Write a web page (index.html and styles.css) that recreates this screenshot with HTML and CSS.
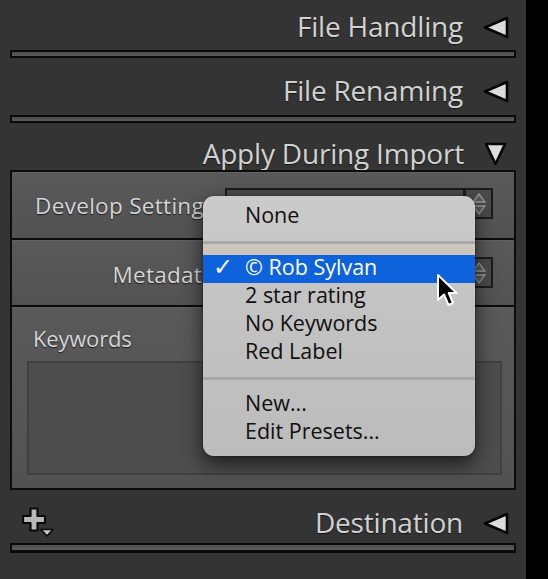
FILE: index.html
```html
<!DOCTYPE html>
<html>
<head>
<meta charset="utf-8">
<title>Import panel</title>
<link rel="stylesheet" href="styles.css">
</head>
<body>
<div class="app">
  <div class="panel">
    <div class="header h1">
      <span class="title">File Handling</span>
      <svg class="tri-left" width="26" height="23" viewBox="0 0 26 23"><polygon points="24,2 24,21 2,11.5" /></svg>
    </div>
    <div class="bar"></div>
    <div class="header h2">
      <span class="title">File Renaming</span>
      <svg class="tri-left" width="26" height="23" viewBox="0 0 26 23"><polygon points="24,2 24,21 2,11.5" /></svg>
    </div>
    <div class="bar"></div>
    <div class="header h3">
      <span class="title">Apply During Import</span>
      <svg class="tri-down" width="23" height="24" viewBox="0 0 23 24"><polygon points="2,2 21,2 11.5,22" /></svg>
    </div>
    <div class="box">
      <div class="row r1">
        <span class="label">Develop Settings</span>
        <div class="field"></div>
        <div class="stepper">
          <svg width="16" height="24" viewBox="0 0 16 24"><polygon points="8,2 14,10 2,10" /><polygon points="2,14 14,14 8,22" /></svg>
        </div>
      </div>
      <div class="row r2">
        <span class="label">Metadata</span>
        <div class="field"></div>
        <div class="stepper">
          <svg width="16" height="24" viewBox="0 0 16 24"><polygon points="8,2 14,10 2,10" /><polygon points="2,14 14,14 8,22" /></svg>
        </div>
      </div>
      <div class="row kw">
        <span class="label kw-label">Keywords</span>
        <div class="textarea"></div>
      </div>
    </div>
    <div class="header h4">
      <svg class="plus" width="34" height="32" viewBox="0 0 34 32">
        <path class="plus-shape" d="M8.5 1.5 h7 v7.5 h7.5 v7 h-7.5 v7.5 h-7 v-7.5 h-7.5 v-7 h7.5 z" />
        <polygon class="plus-tri" points="19,22.5 31,22.5 25,29" />
      </svg>
      <span class="title dest">Destination</span>
      <svg class="tri-left" width="26" height="23" viewBox="0 0 26 23"><polygon points="24,2 24,21 2,11.5" /></svg>
    </div>
    <div class="bar bar-last"></div>
  </div>
  <div class="edge"></div>
</div>

<div class="menu">
  <div class="item"><span class="check"></span><span>None</span></div>
  <div class="sep sep-warm"><div class="sep-line"></div></div>
  <div class="item selected"><span class="check">✓</span><span>© Rob Sylvan</span></div>
  <div class="item"><span class="check"></span><span>2 star rating</span></div>
  <div class="item"><span class="check"></span><span>No Keywords</span></div>
  <div class="item"><span class="check"></span><span>Red Label</span></div>
  <div class="sep"><div class="sep-line"></div></div>
  <div class="item"><span class="check"></span><span>New...</span></div>
  <div class="item"><span class="check"></span><span>Edit Presets...</span></div>
</div>

<svg class="cursor" width="26" height="36" viewBox="0 0 26 36">
  <path d="M2 2 L2 27 L8 21.5 L12.5 32 L17 30 L12.8 20 L20.5 20 Z" />
</svg>
</body>
</html>
```

FILE: styles.css
```css
html, body {
  margin: 0;
  padding: 0;
  width: 548px;
  height: 579px;
  overflow: hidden;
  background: #000;
  font-family: "Open Sans", "Noto Sans", "DejaVu Sans", sans-serif;
}

.app {
  display: flex;
  width: 548px;
  height: 579px;
}

.panel {
  width: 526px;
  height: 579px;
  box-sizing: border-box;
  padding: 0 10px;
  background: #343434;
  display: flex;
  flex-direction: column;
}

.edge {
  flex: 1;
  background: #000;
}

.header {
  display: flex;
  align-items: flex-start;
  justify-content: flex-end;
  box-sizing: border-box;
  padding-right: 7px;
}

.h1 { height: 50px; padding-top: 12px; }
.h2 { height: 57px; padding-top: 18px; }
.h3 { height: 47px; padding-top: 16px; }
.h4 { height: 53px; padding-top: 18px; }

.title {
  font-size: 28px;
  line-height: 28px;
  color: #d2d2d2;
  letter-spacing: -0.2px;
  margin-right: 20px;
  white-space: nowrap;
  text-shadow: 0 1px 1px rgba(0,0,0,0.6);
}

.tri-left {
  flex: none;
  margin-top: 4px;
}
.tri-left polygon, .tri-down polygon {
  fill: #dcdcdc;
  stroke: #050505;
  stroke-width: 2.6;
  stroke-linejoin: round;
}
.tri-down {
  flex: none;
  margin-top: 3px;
  margin-right: 2px;
}

.bar {
  height: 8px;
  box-sizing: border-box;
  border: 2px solid #0a0a0a;
  background: linear-gradient(#4e4e4e, #5a5a5a);
}
.bar-last {
  height: 10px;
  border-width: 2px 2px 3px 2px;
}

.box {
  height: 320px;
  box-sizing: border-box;
  border: 2px solid #0c0c0c;
  display: flex;
  flex-direction: column;
  background: #545454;
}

.row {
  display: flex;
  align-items: flex-start;
  box-sizing: border-box;
  border-bottom: 2px solid #0c0c0c;
  background: linear-gradient(#595959, #525252);
  box-shadow: inset 0 1px 0 #626262;
}
.r1 { height: 68px; padding-top: 16px; }
.r2 { height: 67px; padding-top: 17px; }
.kw {
  flex: 1;
  flex-direction: column;
  border-bottom: none;
  padding: 20px 0 0 15px;
}

.label {
  width: 203px;
  flex: none;
  text-align: right;
  font-size: 22.5px;
  line-height: 31px;
  margin-top: 2px;
  color: #d6d6d6;
  white-space: nowrap;
  text-shadow: 0 1px 1px rgba(0,0,0,0.7);
  margin-right: 10px;
  letter-spacing: 0.3px;
}
.kw-label {
  width: auto;
  text-align: left;
  line-height: 22px;
  font-size: 22px;
  letter-spacing: -0.2px;
  margin: 0 0 12px 6px;
}

.field {
  width: 240px;
  height: 31px;
  box-sizing: border-box;
  border: 2px solid #1c1c1c;
  background: #4b4b4b;
}

.stepper {
  width: 28px;
  height: 31px;
  box-sizing: border-box;
  border: 2px solid #1c1c1c;
  border-left-width: 1px;
  background: #4a4a4a;
  display: flex;
  align-items: center;
  justify-content: center;
}
.stepper polygon {
  fill: #5a5a5a;
  stroke: #9a9a9a;
  stroke-width: 1.3;
}

.textarea {
  width: 475px;
  height: 114px;
  box-sizing: border-box;
  border: 2px solid #404040;
  background: #4d4d4d;
}

.plus {
  flex: none;
  margin-left: 12px;
  margin-top: -1px;
  margin-right: auto;
}
.plus-shape {
  fill: #b8b8b8;
  stroke: #0a0a0a;
  stroke-width: 2.2;
  stroke-linejoin: round;
}
.plus-tri {
  fill: #cacaca;
  stroke: #0a0a0a;
  stroke-width: 1.6;
  stroke-linejoin: round;
}

/* popup menu */
.menu {
  position: absolute;
  left: 203px;
  top: 196px;
  width: 272px;
  height: 260px;
  box-sizing: border-box;
  padding-top: 7px;
  border-radius: 11px;
  background: linear-gradient(#cbcbcb, #c2c2c2 50%, #bcbcbc);
  box-shadow: 0 8px 20px rgba(0,0,0,0.65), 0 0 2px rgba(0,0,0,0.5);
  overflow: hidden;
}

.item {
  display: flex;
  height: 28px;
  box-sizing: border-box;
  padding-left: 10px;
  padding-bottom: 4px;
  font-size: 21.5px;
  line-height: 24px;
  color: #101010;
  white-space: nowrap;
  letter-spacing: 0;
}
.check {
  width: 32px;
  flex: none;
  font-family: "DejaVu Sans", sans-serif;
  font-size: 24px;
  font-weight: bold;
}
.selected {
  background: #0e63dc;
  color: #fff;
}

.sep {
  height: 24px;
  box-sizing: border-box;
  padding-top: 10px;
}
.sep-line {
  height: 3px;
  background: #a9a9a9;
}
.sep-warm {
  background: linear-gradient(rgba(0,0,0,0) 13px, #cdc6bd 13px);
}

.cursor {
  position: absolute;
  left: 436px;
  top: 273px;
}
.cursor path {
  fill: #000;
  stroke: #fff;
  stroke-width: 2;
  stroke-linejoin: round;
}
```
